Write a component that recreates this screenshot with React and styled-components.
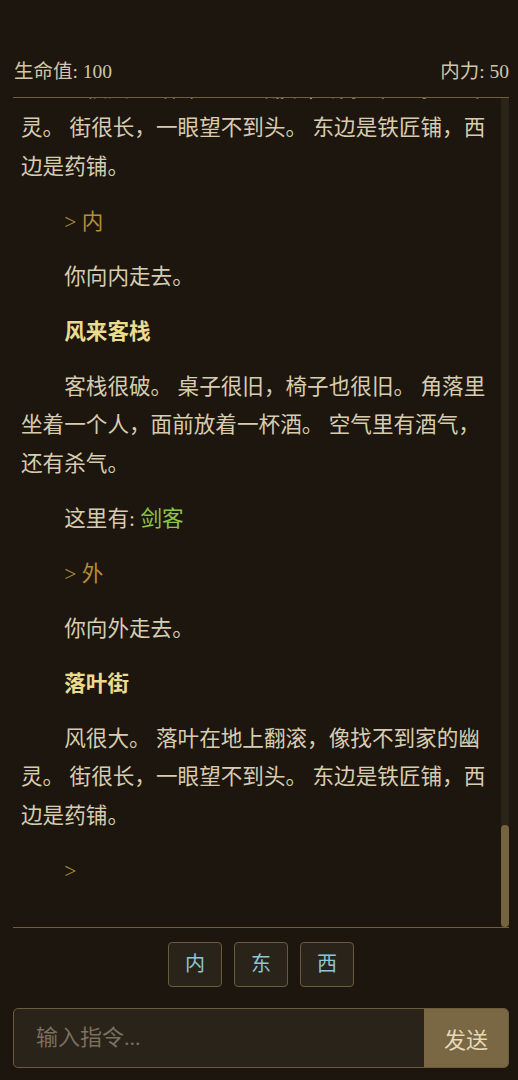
import React, { useLayoutEffect, useRef, useState } from "react";
import styled, { createGlobalStyle } from "styled-components";

const GlobalStyle = createGlobalStyle`
  html, body {
    margin: 0;
    padding: 0;
    background: #1c160e;
  }
  body {
    font-family: "Liberation Serif", "Noto Sans CJK SC", serif;
    color: #d6cab0;
  }
  * { box-sizing: border-box; }
`;

const Page = styled.div`
  height: 100vh;
  display: flex;
  flex-direction: column;
  padding: 58px 9px 12px 13px;
`;

const Status = styled.div`
  display: flex;
  justify-content: space-between;
  font-size: 19.5px;
  line-height: 28px;
  color: #d2c6aa;
  padding-left: 1px;
  margin-bottom: 11px;
`;

// log + its scroll rail side by side
const LogFrame = styled.div`
  flex: 1;
  min-height: 0;
  display: flex;
  border-top: 1px solid #6e5d3e;
  border-bottom: 1px solid #6e5d3e;
`;

const Log = styled.div`
  flex: 1;
  min-width: 0;
  overflow-y: auto;
  scrollbar-width: none;
  padding: 0 8px 20px 8px;
  font-size: 21.6px;
  line-height: 1.8;

  &::-webkit-scrollbar {
    display: none;
  }
`;

const Rail = styled.div`
  width: 8px;
  display: flex;
  flex-direction: column;
  justify-content: flex-end;
  background: #2a2317;
`;

const Thumb = styled.div`
  background: #76633f;
  border-radius: 4px;
`;

const Line = styled.p`
  margin: 0 0 16px;
  text-indent: 2em;
  color: ${(p) =>
    p.$kind === "cmd" ? "#b48c3c" : p.$kind === "title" ? "#eadb8e" : "#d8ccb0"};
  font-weight: ${(p) => (p.$kind === "title" ? 700 : 400)};
`;

const Npc = styled.span`
  color: #8fc44a;
`;

const Exits = styled.div`
  display: flex;
  justify-content: center;
  gap: 12px;
  margin-top: 14px;
`;

const ExitButton = styled.button`
  font-family: "Liberation Serif", "Noto Sans CJK SC", serif;
  font-size: 20px;
  line-height: 23px;
  padding: 10px 16px;
  background: #29231a;
  color: #8ec6d6;
  border: 1px solid #6b5a3c;
  border-radius: 4px;
`;

const InputRow = styled.form`
  display: flex;
  margin-top: 21px;
  height: 60px;
  border: 1px solid #6b5a3c;
  border-radius: 5px;
  overflow: hidden;
  background: #29231a;
`;

const CommandInput = styled.input`
  flex: 1;
  min-width: 0;
  background: transparent;
  border: none;
  outline: none;
  padding: 0 22px;
  font-family: "Liberation Serif", "Noto Sans CJK SC", serif;
  font-size: 22px;
  color: #d6cab0;

  &::placeholder {
    color: #7a705e;
  }
`;

const SendButton = styled.button`
  width: 84px;
  border: none;
  background: #7a6744;
  color: #e6d8b8;
  font-family: "Liberation Serif", "Noto Sans CJK SC", serif;
  font-size: 22px;
`;

const street = [
  { kind: "title", text: "落叶街" },
  {
    kind: "text",
    text: "风很大。 落叶在地上翻滚，像找不到家的幽灵。 街很长，一眼望不到头。 东边是铁匠铺，西边是药铺。",
  },
];

const inn = [
  { kind: "cmd", text: "> 内" },
  { kind: "text", text: "你向内走去。" },
  { kind: "title", text: "风来客栈" },
  {
    kind: "text",
    text: "客栈很破。 桌子很旧，椅子也很旧。 角落里坐着一个人，面前放着一杯酒。 空气里有酒气，还有杀气。",
  },
  { kind: "npc", text: "这里有: ", npc: "剑客" },
  { kind: "cmd", text: "> 外" },
  { kind: "text", text: "你向外走去。" },
];

const buildLog = () => {
  let out = [...street];
  for (let i = 0; i < 10; i++) out = out.concat(inn, street);
  out.push({ kind: "cmd", text: ">" });
  return out;
};

const entries = buildLog();

export default function App() {
  const logRef = useRef(null);
  const [thumb, setThumb] = useState(95);

  useLayoutEffect(() => {
    const el = logRef.current;
    if (!el) return;
    el.scrollTop = el.scrollHeight;
    const h = (el.clientHeight * el.clientHeight) / el.scrollHeight;
    setThumb(Math.max(24, Math.round(h)));
  }, []);

  return (
    <>
      <GlobalStyle />
      <Page>
        <Status>
          <span>生命值: 100</span>
          <span>内力: 50</span>
        </Status>
        <LogFrame>
          <Log ref={logRef}>
            {entries.map((e, i) =>
              e.kind === "npc" ? (
                <Line key={i}>
                  {e.text}
                  <Npc>{e.npc}</Npc>
                </Line>
              ) : (
                <Line key={i} $kind={e.kind}>
                  {e.text}
                </Line>
              )
            )}
          </Log>
          <Rail>
            <Thumb style={{ height: thumb }} />
          </Rail>
        </LogFrame>
        <Exits>
          <ExitButton>内</ExitButton>
          <ExitButton>东</ExitButton>
          <ExitButton>西</ExitButton>
        </Exits>
        <InputRow onSubmit={(e) => e.preventDefault()}>
          <CommandInput placeholder="输入指令..." />
          <SendButton type="submit">发送</SendButton>
        </InputRow>
      </Page>
    </>
  );
}
